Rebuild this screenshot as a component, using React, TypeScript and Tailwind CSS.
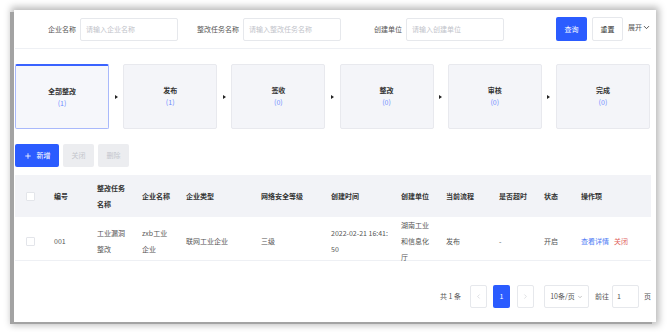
import { ChevronDown, ChevronLeft, ChevronRight, Plus } from 'lucide-react';

const font = { fontFamily: '"Noto Sans CJK SC", "Noto Sans", sans-serif' };

const steps = [
  { name: '全部整改', count: 1, active: true },
  { name: '发布', count: 1 },
  { name: '签收', count: 0 },
  { name: '整改', count: 0 },
  { name: '审核', count: 0 },
  { name: '完成', count: 0 },
];

const cols = 'grid grid-cols-[39px_43px_45px_44px_75px_70px_70px_45px_53px_45px_37px_70px]';

function Field({ label, placeholder }: { label: string; placeholder: string }) {
  return (
    <div className="flex items-center">
      <div className="w-[65px] pr-[4px] text-right text-[7px] text-[#555]">{label}</div>
      <div className="w-[98px] h-[23px] border border-[#e6e8ec] rounded-[2px] flex items-center px-[5px] text-[7px] text-[#bfc3ca]">
        {placeholder}
      </div>
    </div>
  );
}

function Checkbox() {
  return <div className="w-[9px] h-[9px] bg-white border border-[#e3e5ea] rounded-[1px] ml-[11px]" />;
}

export default function App() {
  return (
    <div className="w-[672px] h-[332px] bg-white overflow-hidden pt-[10px] pl-[14px]" style={font}>
      <div className="w-[642px] h-[312px] bg-white pl-[1px] pr-[5px] shadow-[-4px_2px_0_0_#a3a3a3,0_0_7px_3px_rgba(0,0,0,0.28)]">
        {/* search */}
        <div className="h-[39px] flex items-center border-b border-[#eef0f4]">
          <Field label="企业名称" placeholder="请输入企业名称" />
          <Field label="整改任务名称" placeholder="请输入整改任务名称" />
          <Field label="创建单位" placeholder="请输入创建单位" />
          <div className="flex-1" />
          <button className="w-[31px] h-[24px] bg-[#2b5cff] text-white text-[7px] rounded-[2px]">查询</button>
          <button className="w-[31px] h-[24px] ml-[5px] bg-white border border-[#e6e8ec] text-[#333] text-[7px] rounded-[2px]">重置</button>
          <div className="ml-[5px] flex items-center text-[7px] text-[#555] -mt-[4px]">
            展开
            <ChevronDown className="w-[9px] h-[9px] text-[#333]" strokeWidth={2.2} />
          </div>
        </div>

        {/* steps */}
        <div className="mt-[15px] flex items-center justify-between w-[635px]">
          {steps.map((s, i) => (
            <div key={s.name} className="contents">
              {i > 0 && (
                <div className="w-0 h-0 border-y-[2.5px] border-y-transparent border-l-[3px] border-l-[#222]" />
              )}
              <div
                className={`w-[94px] h-[65px] rounded-[2px] flex flex-col items-center justify-center gap-[5px] ${
                  s.active
                    ? 'bg-[#f6f7fb] border border-[#a9b9fb] border-t-[2px] border-t-[#3a63ff]'
                    : 'bg-[#f4f5f9] border border-[#e8e9ee]'
                }`}
              >
                <div className="text-[7px] font-bold text-[#333] leading-none">{s.name}</div>
                <div className="text-[7px] text-[#6f8cff] leading-none">({s.count})</div>
              </div>
            </div>
          ))}
        </div>

        {/* actions */}
        <div className="mt-[15px] flex items-center gap-[4px]">
          <button className="w-[44px] h-[23px] bg-[#2b5cff] text-white text-[7px] rounded-[2px] flex items-center justify-center gap-[5px]">
            <Plus className="w-[8px] h-[8px]" strokeWidth={2.5} />
            新增
          </button>
          <button className="w-[31px] h-[23px] bg-[#ecedf0] text-[#c3c6cc] text-[7px] rounded-[2px]">关闭</button>
          <button className="w-[31px] h-[23px] bg-[#ecedf0] text-[#c3c6cc] text-[7px] rounded-[2px]">删除</button>
        </div>

        {/* table */}
        <div className="mt-[8px] w-[636px] text-[7px] leading-[16px]">
          <div className={`${cols} h-[42px] bg-[#f2f3f7] items-center font-bold text-[#333]`}>
            <Checkbox />
            <div>编号</div>
            <div className="pr-[12px]">整改任务名称</div>
            <div>企业名称</div>
            <div>企业类型</div>
            <div>网络安全等级</div>
            <div>创建时间</div>
            <div>创建单位</div>
            <div>当前流程</div>
            <div>是否超时</div>
            <div>状态</div>
            <div>操作项</div>
          </div>
          <div className={`${cols} h-[44px] items-center text-[#555] border-b border-[#eef0f4] break-all`}>
            <Checkbox />
            <div>001</div>
            <div className="pr-[12px]">工业漏洞整改</div>
            <div className="pr-[12px]">zxb工业企业</div>
            <div>联网工业企业</div>
            <div>三级</div>
            <div className="pr-[11px]">2022-02-21 16:41:50</div>
            <div className="pr-[12px]">湖南工业和信息化厅</div>
            <div>发布</div>
            <div>-</div>
            <div>开启</div>
            <div className="flex gap-[5px]">
              <span className="text-[#4f7cf5]">查看详情</span>
              <span className="text-[#e0605b]">关闭</span>
            </div>
          </div>
        </div>

        {/* pagination */}
        <div className="mt-[24px] w-[636px] flex items-center justify-end text-[7px] text-[#555]">
          <span>共 1 条</span>
          <div className="ml-[9px] w-[17px] h-[23px] border border-[#e6e8ec] rounded-[2px] flex items-center justify-center text-[#c8cbd1]">
            <ChevronLeft className="w-[7px] h-[7px]" />
          </div>
          <div className="ml-[6px] w-[17px] h-[23px] bg-[#2b5cff] text-white rounded-[2px] flex items-center justify-center">1</div>
          <div className="ml-[7px] w-[17px] h-[23px] border border-[#e6e8ec] rounded-[2px] flex items-center justify-center text-[#c8cbd1]">
            <ChevronRight className="w-[7px] h-[7px]" />
          </div>
          <div className="ml-[10px] w-[45px] h-[23px] border border-[#e6e8ec] rounded-[2px] flex items-center justify-center gap-[2px]">
            10条/页
            <ChevronDown className="w-[6px] h-[6px] text-[#888]" />
          </div>
          <span className="ml-[6px]">前往</span>
          <div className="ml-[3px] w-[27px] h-[23px] border border-[#e6e8ec] rounded-[2px] flex items-center px-[4px]">1</div>
          <span className="ml-[5px]">页</span>
        </div>
      </div>
    </div>
  );
}
